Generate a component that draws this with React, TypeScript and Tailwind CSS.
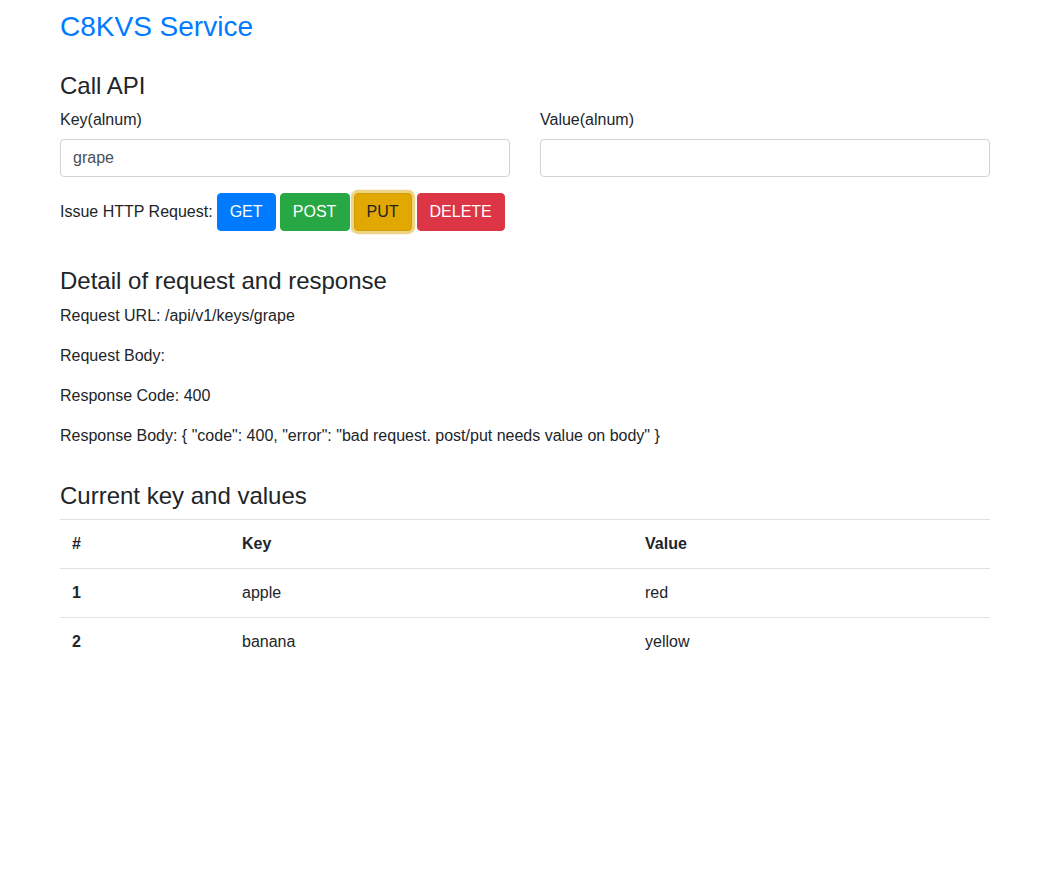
import { useState } from "react";

const rows = [
  { id: 1, key: "apple", value: "red" },
  { id: 2, key: "banana", value: "yellow" },
];

export default function App() {
  const [key, setKey] = useState("grape");
  const [value, setValue] = useState("");

  return (
    <div className="min-h-screen bg-white font-['Liberation_Sans',Arial,sans-serif] text-base leading-6 text-[#212529]">
      <div className="mx-auto w-[960px] px-[15px] pt-[10px]">
        <h3 className="text-[28px] leading-[1.2] font-normal text-[#007bff]">
          C8KVS Service
        </h3>

        <h4 className="mt-[28px] mb-2 text-2xl leading-[1.2] font-normal">Call API</h4>
        <div className="flex gap-[30px]">
          <div className="flex-1">
            <label className="mb-[7px] block">Key(alnum)</label>
            <input
              type="text"
              value={key}
              onChange={(e) => setKey(e.target.value)}
              className="block h-[38px] w-full rounded border border-[#ced4da] px-3 py-1.5 text-[#495057] outline-none"
            />
          </div>
          <div className="flex-1">
            <label className="mb-[7px] block">Value(alnum)</label>
            <input
              type="text"
              value={value}
              onChange={(e) => setValue(e.target.value)}
              className="block h-[38px] w-full rounded border border-[#ced4da] px-3 py-1.5 text-[#495057] outline-none"
            />
          </div>
        </div>

        <div className="mt-4 flex items-center gap-1">
          <span>Issue HTTP Request:</span>
          <button className="h-[38px] rounded border border-[#007bff] bg-[#007bff] px-3 text-white">
            GET
          </button>
          <button className="h-[38px] w-[70px] rounded border border-[#28a745] bg-[#28a745] text-white">
            POST
          </button>
          <button className="h-[38px] rounded border border-[#d39e00] bg-[#e0a800] px-3 text-[#212529] shadow-[0_0_0_3.2px_rgba(222,170,12,0.5)]">
            PUT
          </button>
          <button className="ml-px h-[38px] rounded border border-[#dc3545] bg-[#dc3545] px-3 text-white">
            DELETE
          </button>
        </div>

        <h4 className="mt-[36px] mb-2 text-2xl leading-[1.2] font-normal">
          Detail of request and response
        </h4>
        <p className="mb-4">Request URL: /api/v1/keys/grape</p>
        <p className="mb-4">Request Body:</p>
        <p className="mb-4">Response Code: 400</p>
        <p className="mb-4">
          Response Body: {'{ "code": 400, "error": "bad request. post/put needs value on body" }'}
        </p>

        <h4 className="mt-[34px] mb-[8px] text-2xl leading-[1.2] font-normal">
          Current key and values
        </h4>
        <table className="w-full border-collapse text-left">
          <thead>
            <tr>
              <th className="w-[170px] border-t border-[#dee2e6] p-3 font-bold">#</th>
              <th className="w-[403px] border-t border-[#dee2e6] p-3 font-bold">Key</th>
              <th className="border-t border-[#dee2e6] p-3 font-bold">Value</th>
            </tr>
          </thead>
          <tbody>
            {rows.map((r) => (
              <tr key={r.id}>
                <th className="border-t border-[#dee2e6] p-3 font-bold">{r.id}</th>
                <td className="border-t border-[#dee2e6] p-3">{r.key}</td>
                <td className="border-t border-[#dee2e6] p-3">{r.value}</td>
              </tr>
            ))}
          </tbody>
        </table>
      </div>
    </div>
  );
}
